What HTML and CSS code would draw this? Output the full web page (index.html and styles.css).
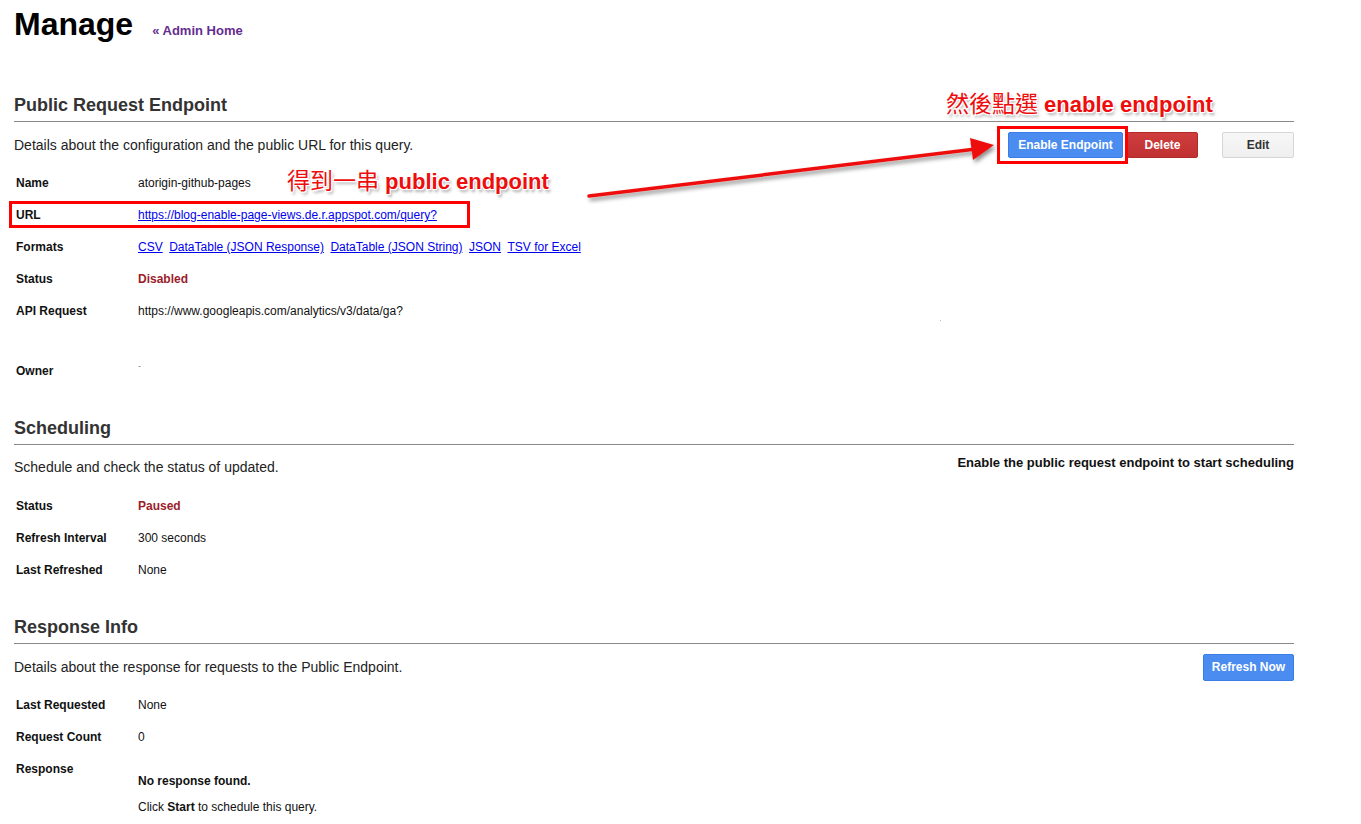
FILE: index.html
```html
<!DOCTYPE html>
<html>
<head>
<meta charset="utf-8">
<link rel="stylesheet" href="styles.css">
</head>
<body>
<div class="page">
  <header class="top">
    <h1 class="title">Manage</h1>
    <a class="home" href="#">« Admin Home</a>
  </header>

  <section class="sec sec-public">
    <h2 class="sec-title">Public Request Endpoint</h2>
    <div class="intro">
      <p class="desc">Details about the configuration and the public URL for this query.</p>
      <div class="actions">
        <button class="btn btn-blue btn-enable">Enable Endpoint</button>
        <button class="btn btn-red btn-delete">Delete</button>
        <button class="btn btn-grey btn-edit">Edit</button>
      </div>
    </div>
    <div class="rows">
      <div class="row"><div class="lbl">Name</div><div class="val">atorigin-github-pages</div></div>
      <div class="row"><div class="lbl">URL</div><div class="val"><a href="#" class="lnk">https://blog-enable-page-views.de.r.appspot.com/query?</a></div></div>
      <div class="row"><div class="lbl">Formats</div><div class="val links"><a href="#" class="lnk">CSV</a><a href="#" class="lnk">DataTable (JSON Response)</a><a href="#" class="lnk">DataTable (JSON String)</a><a href="#" class="lnk">JSON</a><a href="#" class="lnk">TSV for Excel</a></div></div>
      <div class="row"><div class="lbl">Status</div><div class="val status">Disabled</div></div>
      <div class="row row-tall"><div class="lbl">API Request</div><div class="val">https://www.googleapis.com/analytics/v3/data/ga?</div></div>
      <div class="row"><div class="lbl">Owner</div><div class="val dash">-</div></div>
    </div>
  </section>

  <section class="sec sec-sched">
    <h2 class="sec-title">Scheduling</h2>
    <div class="intro intro-top">
      <p class="desc">Schedule and check the status of updated.</p>
      <p class="note">Enable the public request endpoint to start scheduling</p>
    </div>
    <div class="rows">
      <div class="row"><div class="lbl">Status</div><div class="val status">Paused</div></div>
      <div class="row"><div class="lbl">Refresh Interval</div><div class="val">300 seconds</div></div>
      <div class="row"><div class="lbl">Last Refreshed</div><div class="val">None</div></div>
    </div>
  </section>

  <section class="sec sec-resp">
    <h2 class="sec-title">Response Info</h2>
    <div class="intro">
      <p class="desc">Details about the response for requests to the Public Endpoint.</p>
      <button class="btn btn-blue btn-refresh">Refresh Now</button>
    </div>
    <div class="rows">
      <div class="row"><div class="lbl">Last Requested</div><div class="val">None</div></div>
      <div class="row"><div class="lbl">Request Count</div><div class="val">0</div></div>
      <div class="row row-resp"><div class="lbl">Response</div>
        <div class="val resp-val">
          <div class="resp-none">No response found.</div>
          <div class="resp-hint">Click <b>Start</b> to schedule this query.</div>
        </div>
      </div>
    </div>
  </section>

  <span class="dot"></span>

  <div class="mark mark-url"></div>
  <div class="mark mark-enable"></div>
  <svg class="arrow" width="440" height="80" viewBox="0 0 440 80">
    <defs>
      <filter id="sh" x="-10%" y="-50%" width="120%" height="200%">
        <feDropShadow dx="2" dy="3" stdDeviation="2" flood-color="#000" flood-opacity="0.45"/>
      </filter>
    </defs>
    <g filter="url(#sh)">
      <line x1="5" y1="72" x2="392" y2="25" stroke="#ee1111" stroke-width="3.5" stroke-linecap="round"/>
      <polygon points="410,21 386,14 389,36" fill="#ee1111"/>
    </g>
  </svg>
  <div class="note-ann ann-1"><span class="cjk">然後點選</span> enable endpoint</div>
  <div class="note-ann ann-2"><span class="cjk">得到一串</span> public endpoint</div>
</div>
</body>
</html>
```

FILE: styles.css
```css
* { box-sizing: border-box; }
html, body { margin: 0; padding: 0; background: #fff; }
body {
  font-family: "Liberation Sans", Arial, sans-serif;
  color: #222;
}
.page {
  position: relative;
  width: 1294px;
  padding: 6px 0 0 14px;
}
.top {
  display: flex;
  align-items: baseline;
  height: 36px;
}
.title {
  margin: 0;
  font-size: 32px;
  line-height: 36px;
  font-weight: bold;
  color: #000;
}
.home {
  margin-left: 19px;
  font-size: 13px;
  font-weight: bold;
  color: #662d91;
  text-decoration: none;
}
.sec-title {
  margin: 0;
  font-size: 18px;
  line-height: 22px;
  font-weight: bold;
  color: #333;
  padding-bottom: 5px;
  border-bottom: 1px solid #8a8a8a;
}
.sec-public { margin-top: 52px; }
.sec-sched { margin-top: 30px; }
.sec-resp { margin-top: 30px; }

.intro {
  display: flex;
  align-items: center;
  justify-content: space-between;
  margin-top: 10px;
  height: 26px;
}
.intro-top {
  margin-top: 13px;
  height: 18px;
  align-items: flex-start;
}
.sec-resp .intro { margin-top: 9px; height: 28px; }
.desc {
  margin: 0;
  font-size: 14px;
  line-height: 18px;
  color: #222;
}
.note {
  margin: -4px 0 0 0;
  font-size: 13px;
  line-height: 18px;
  font-weight: bold;
  color: #111;
}
.actions {
  display: flex;
  align-items: center;
}
.btn {
  height: 26px;
  border-radius: 2px;
  font-family: "Liberation Sans", Arial, sans-serif;
  font-size: 12px;
  font-weight: bold;
  padding: 0;
  cursor: pointer;
}
.btn-blue {
  background: #4a8cf0;
  border: 1px solid #3a7ce8;
  color: #fff;
}
.btn-red {
  background: linear-gradient(#cf3d3d, #c13131);
  border: 1px solid #b02a2a;
  color: #fff;
}
.btn-grey {
  background: linear-gradient(#f7f7f7, #efefef);
  border: 1px solid #d6d6d6;
  color: #333;
}
.btn-enable { width: 115px; }
.btn-delete { width: 71px; margin-left: 4px; }
.btn-edit { width: 72px; margin-left: 24px; }
.btn-refresh { width: 91px; height: 27px; }

.rows { margin-top: 9px; }
.sec-sched .rows { margin-top: 14px; }
.sec-resp .rows { margin-top: 8px; }
.row {
  display: flex;
  height: 32px;
  align-items: center;
  font-size: 12px;
}
.row-tall {
  height: 60px;
  align-items: flex-start;
  padding-top: 9px;
}
.lbl {
  width: 124px;
  padding-left: 2px;
  font-weight: bold;
  color: #111;
}
.val { color: #111; }
.lnk { color: #0000ee; text-decoration: underline; }
.links .lnk { margin-right: 6.5px; }
.status { color: #9b1c2a; font-weight: bold; }
.dash { color: #777; font-size: 9px; margin-top: -10px; }
.row-resp {
  height: auto;
  align-items: flex-start;
  padding-top: 9px;
}
.resp-val { padding-top: 12px; }
.resp-none { font-weight: bold; line-height: 14px; color: #111; }
.resp-hint { margin-top: 12px; line-height: 14px; }
.resp-hint b { color: #111; }

.dot {
  position: absolute;
  left: 940px;
  top: 320px;
  width: 1px;
  height: 1px;
  background: #bbb;
}

.mark {
  position: absolute;
  border: 3px solid #f00;
}
.mark-url { left: 9px; top: 201px; width: 461px; height: 27px; }
.mark-enable { left: 997px; top: 126px; width: 131px; height: 38px; }
.arrow {
  position: absolute;
  left: 584px;
  top: 124px;
}
.note-ann {
  position: absolute;
  font-family: "Liberation Sans", Arial, sans-serif;
  font-weight: bold;
  font-size: 22px;
  line-height: 28px;
  color: #ee0d0d;
  white-space: nowrap;
  text-shadow:
    -1px -1px 0 #fff, 1px -1px 0 #fff, -1px 1px 0 #fff, 1px 1px 0 #fff,
    0 0 3px #fff, 2px 3px 3px rgba(0,0,0,0.35);
}
.cjk {
  font-family: "Noto Sans CJK TC", "Noto Sans CJK SC", sans-serif;
  font-weight: normal;
  font-size: 23px;
}
.ann-1 { left: 946px; top: 88px; }
.ann-2 { left: 287px; top: 165px; }
```
